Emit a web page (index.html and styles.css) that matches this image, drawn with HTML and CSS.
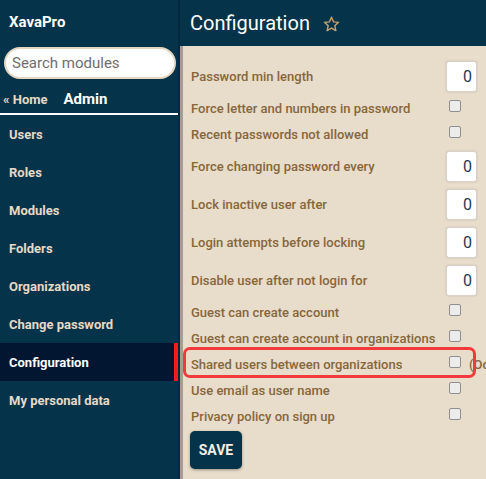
FILE: index.html
```html
<!DOCTYPE html>
<html>
<head>
<meta charset="utf-8">
<link rel="stylesheet" href="styles.css">
</head>
<body>
<div class="app">
  <aside class="sidebar">
    <div class="brand">XavaPro</div>
    <div class="search"><input class="search-input" type="text" placeholder="Search modules"></div>
    <div class="crumbs"><span class="home">« Home</span><span class="folder">Admin</span></div>
    <nav class="menu">
      <div class="item">Users</div>
      <div class="item">Roles</div>
      <div class="item">Modules</div>
      <div class="item">Folders</div>
      <div class="item">Organizations</div>
      <div class="item">Change password</div>
      <div class="item active">Configuration</div>
      <div class="item">My personal data</div>
    </nav>
  </aside>
  <main class="main">
    <header class="topbar">
      <h1 class="title">Configuration</h1>
      <svg class="star" width="17" height="16" viewBox="0 0 24 23"><path d="M12 1.8l2.9 6.6 7.2.7-5.4 4.8 1.6 7.1L12 17.3 5.7 21l1.6-7.1-5.4-4.8 7.2-.7z" fill="none" stroke="#c8a46a" stroke-width="2" stroke-linejoin="round"/></svg>
    </header>
    <section class="content">
      <div class="form">
        <div class="row tall"><span class="label">Password min length</span><span class="value"><span class="num">0</span></span></div>
        <div class="row"><span class="label">Force letter and numbers in password</span><span class="value"><span class="check"></span></span></div>
        <div class="row"><span class="label">Recent passwords not allowed</span><span class="value"><span class="check"></span></span></div>
        <div class="row tall"><span class="label">Force changing password every</span><span class="value"><span class="num">0</span></span></div>
        <div class="row tall"><span class="label">Lock inactive user after</span><span class="value"><span class="num">0</span></span></div>
        <div class="row tall"><span class="label">Login attempts before locking</span><span class="value"><span class="num">0</span></span></div>
        <div class="row tall"><span class="label">Disable user after not login for</span><span class="value"><span class="num">0</span></span></div>
        <div class="row"><span class="label">Guest can create account</span><span class="value"><span class="check"></span></span></div>
        <div class="row"><span class="label">Guest can create account in organizations</span><span class="value"><span class="check"></span></span></div>
        <div class="row marked"><span class="label">Shared users between organizations</span><span class="value"><span class="check"></span><span class="note">(Oc</span></span><span class="highlight"></span></div>
        <div class="row"><span class="label">Use email as user name</span><span class="value"><span class="check"></span></span></div>
        <div class="row"><span class="label">Privacy policy on sign up</span><span class="value"><span class="check"></span></span></div>
      </div>
      <button class="save">SAVE</button>
    </section>
  </main>
</div>
</body>
</html>
```
FILE: styles.css
```css
* { box-sizing: border-box; }
html, body { margin: 0; padding: 0; height: 100%; overflow: hidden; }
body { font-family: Roboto, "Liberation Sans", sans-serif; background: #e8dcca; }
.app { display: flex; height: 479px; }

.sidebar {
  width: 180px;
  flex: 0 0 180px;
  background: #05344a;
  border-right: 2px solid #032a3c;
  display: flex;
  flex-direction: column;
}
.brand {
  color: #fff;
  font-weight: 700;
  font-size: 15px;
  padding: 13px 0 0 9px;
  height: 47px;
}
.search { padding: 0 2px 0 4px; }
.search-input {
  width: 172px;
  height: 32px;
  border-radius: 16px;
  border: 2px solid #e4d6bf;
  background: #fff;
  font-family: Roboto, "Liberation Sans", sans-serif;
  font-size: 15px;
  padding: 0 6px;
  outline: none;
}
.search-input::placeholder { color: #6e6e6e; }
.crumbs {
  display: flex;
  align-items: baseline;
  gap: 16px;
  padding: 11px 0 0 3px;
  height: 36px;
  border-bottom: 2px solid #fff;
}
.home { color: #e6d9c5; font-weight: 700; font-size: 13px; }
.folder { color: #fff; font-weight: 700; font-size: 15px; }
.menu { display: flex; flex-direction: column; }
.item {
  height: 38px;
  display: flex;
  align-items: center;
  padding-left: 9px;
  color: #e6d9c5;
  font-weight: 700;
  font-size: 13px;
}
.item.active {
  background: #021632;
  color: #fff;
  border-right: 4px solid #f41c1c;
}

.main { flex: 1; display: flex; flex-direction: column; min-width: 0; overflow: hidden; }
.topbar {
  height: 46px;
  background: #05344a;
  display: flex;
  align-items: center;
  padding-left: 10px;
  gap: 13px;
}
.title {
  margin: 0;
  color: #fff;
  font-weight: 400;
  font-size: 20px;
}
.star { margin-top: 2px; }
.content {
  flex: 1;
  border-left: 3px solid #a69d90;
  padding: 11px 0 0 8px;
}
.form { display: flex; flex-direction: column; }
.row {
  position: relative;
  display: grid;
  grid-template-columns: 255px auto;
  align-items: center;
  height: 26px;
}
.row.tall { height: 38px; }
.label { color: #86673c; font-size: 13px; font-weight: 500; white-space: nowrap; }
.value { display: flex; align-items: center; white-space: nowrap; }
.num {
  width: 31px;
  height: 31px;
  background: #fff;
  border: 1px solid #d8d2c8;
  border-radius: 3px;
  box-shadow: 0 0 2px rgba(0,0,0,0.15);
  color: #1f3a58;
  font-size: 16px;
  display: flex;
  align-items: center;
  justify-content: flex-end;
  padding-right: 4px;
}
.check {
  width: 12px;
  height: 12px;
  margin: -5px 0 0 3px;
  background: #ececec;
  border: 1px solid #8f8f8f;
  border-radius: 2px;
}
.note { color: #86673c; font-size: 13px; font-weight: 500; margin-left: 8px; }
.highlight {
  position: absolute;
  left: -8px;
  top: -4px;
  width: 293px;
  height: 31px;
  border: 3px solid #f2393c;
  border-radius: 7px;
  pointer-events: none;
}
.save {
  margin-top: 2px;
  width: 52px;
  height: 38px;
  background: #05344a;
  color: #f4eee4;
  border: none;
  border-radius: 5px;
  font-family: Roboto, "Liberation Sans", sans-serif;
  font-weight: 700;
  font-size: 14px;
  box-shadow: 0 1px 3px rgba(0,0,0,0.35);
  margin-left: -1px;
}
```
